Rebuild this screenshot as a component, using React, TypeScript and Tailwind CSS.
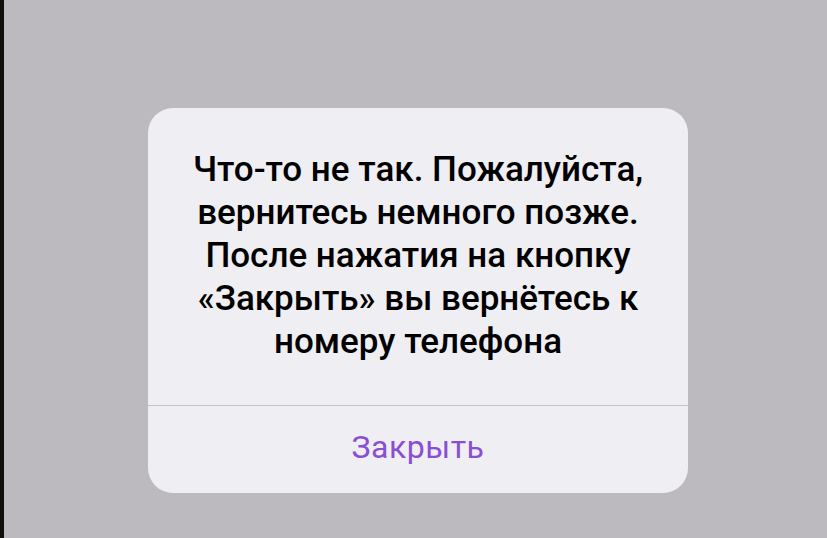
export default function App() {
  return (
    <div className="flex h-[538px] w-full overflow-hidden bg-[#bcbabe]" style={{ fontFamily: "Roboto, 'Noto Sans', sans-serif" }}>
      <div className="w-[4px] shrink-0 bg-[#0e0f0d]" />
      <div className="flex flex-1 justify-center pl-[5px] pt-[108px]">
        <div className="flex h-[385px] w-[540px] flex-col overflow-hidden rounded-[25px] bg-[#efeef2]">
          <div className="flex h-[297px] items-center justify-center px-[30px] pb-[2px]">
            <p className="text-center text-[35px] font-medium leading-[43px] text-black">
              Что-то не так. Пожалуйста, вернитесь немного позже. После нажатия на кнопку «Закрыть» вы вернётесь к номеру телефона
            </p>
          </div>
          <div className="h-px bg-[#c4c3c7]" />
          <button className="flex flex-1 items-center justify-center pb-[6px] text-[32px] tracking-[0.5px] text-[#8a4dd6]">
            Закрыть
          </button>
        </div>
      </div>
    </div>
  );
}
